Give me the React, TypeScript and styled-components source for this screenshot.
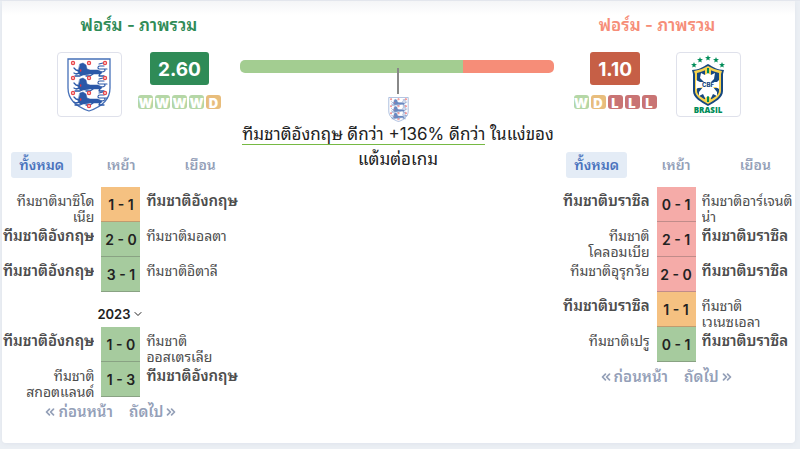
import React from "react";
import styled, { createGlobalStyle } from "styled-components";
import { ChevronDown, ChevronsLeft, ChevronsRight } from "lucide-react";

const GlobalStyle = createGlobalStyle`
  * { box-sizing: border-box; }
  body {
    margin: 0;
    background: #ebeff4;
    color: #222;
    font-family: Inter, "Noto Sans Thai Looped", "Noto Looped Thai", Loma, Waree, "Leelawadee UI", Tahoma, sans-serif;
    font-size: 14px;
  }
  button { font: inherit; border: 0; background: none; padding: 0; cursor: pointer; }
`;

const Page = styled.div`
  padding: 0 5px 6px 2px;
  border-top: 1px solid #e4e7ee;
`;

const Card = styled.main`
  display: grid;
  grid-template-columns: 3fr 4fr 3fr;
  min-height: 442px;
  border-radius: 0 0 4px 4px;
  background: linear-gradient(#f4f5f7, #fff 14px);
  box-shadow: 0 1px 4px #dfe4ec;
`;

const Column = styled.section`
  min-width: 0;
`;

const Summary = styled.header<{ $mirror?: boolean }>`
  display: flex;
  flex-direction: column;
  align-items: center;
  height: 151px;
  padding: ${(p) => (p.$mirror ? "12px 38px 0 0" : "12px 0 0 36px")};
`;

const Title = styled.h2<{ $color: string }>`
  margin: 0 0 15px;
  font-size: 17px;
  line-height: 24px;
  font-weight: 600;
  color: ${(p) => p.$color};
`;

const Team = styled.div<{ $mirror?: boolean }>`
  display: flex;
  flex-direction: ${(p) => (p.$mirror ? "row-reverse" : "row")};
  gap: ${(p) => (p.$mirror ? 19 : 16)}px;
`;

const LogoBox = styled.div`
  display: flex;
  align-items: center;
  justify-content: center;
  width: 65px;
  height: 65px;
  border: 1px solid #dfe1eb;
  border-radius: 4px;
  background: #fff;
`;

const Form = styled.div`
  display: flex;
  flex-direction: column;
  align-items: center;
  gap: 10px;
`;

const Rating = styled.strong<{ $color: string }>`
  padding: 0 8px;
  border-radius: 3px;
  background: ${(p) => p.$color};
  color: #fff;
  font-size: 19px;
  line-height: 36px;
  height: 33px;
  font-weight: 700;
`;

const Results = styled.div`
  display: flex;
  gap: 2px;
`;

const resultColors: Record<string, string> = { W: "#b5d7a6", D: "#e8bd7c", L: "#c97474" };

const Result = styled.span<{ $kind: string }>`
  display: flex;
  justify-content: center;
  width: 15px;
  height: 14px;
  border-radius: 3px;
  background: ${(p) => resultColors[p.$kind]};
  color: #fff;
  font-size: 13px;
  line-height: 16px;
  font-weight: 900;
`;

const Tabs = styled.nav`
  display: grid;
  grid-template-columns: repeat(3, 1fr);
  justify-items: center;
  margin-bottom: 9px;
`;

const Tab = styled.button<{ $active?: boolean }>`
  && {
    height: 26px;
    padding: 0 8px;
    border-radius: 3px;
    background: ${(p) => (p.$active ? "#e4ecf6" : "transparent")};
    color: ${(p) => (p.$active ? "#4a73bd" : "#94a0b8")};
    font-size: 14px;
    line-height: 26px;
    font-weight: 600;
  }
`;

const Matches = styled.table`
  width: 100%;
  table-layout: fixed;
  border-collapse: collapse;
`;

const TeamCell = styled.td<{ $bold?: boolean; $home?: boolean }>`
  height: 35px;
  padding: ${(p) => (p.$home ? "0 7px 0 0" : "0 0 0 6px")};
  color: #4d4d4d;
  font-size: ${(p) => (p.$bold ? 15 : 14)}px;
  font-weight: ${(p) => (p.$bold ? 600 : 400)};
  text-align: ${(p) => (p.$home ? "right" : "left")};
  white-space: ${(p) => (p.$bold ? "nowrap" : "normal")};
  vertical-align: top;
`;

const TeamName = styled.div`
  height: 35px;
  padding-top: 6px;
  overflow: hidden;
  line-height: 16px;
`;

const scoreColors = { win: "#a6cb9e", draw: "#f5c181", loss: "#f5aba8" };

const Score = styled.td<{ $kind: keyof typeof scoreColors }>`
  width: 39px;
  height: 35px;
  padding: 0;
  background: ${(p) => scoreColors[p.$kind]};
  box-shadow: inset 0 -1px rgba(70, 70, 70, 0.3);
  color: #222;
  font-size: 14px;
  font-weight: 600;
  text-align: center;
  white-space: nowrap;
`;

const Season = styled.button`
  && {
    display: flex;
    align-items: center;
    justify-content: center;
    gap: 2px;
    width: 100%;
    height: 35px;
    padding-top: 8px;
    color: #222;
    font-size: 13px;
    font-weight: 600;
  }
`;

const Pager = styled.nav`
  display: flex;
  justify-content: center;
  gap: 16px;
  padding: 5px 20px 0 0;
`;

const PageButton = styled.button`
  && {
    display: flex;
    align-items: center;
    gap: 1px;
    color: #94a0b8;
    font-size: 15px;
    line-height: 20px;
    font-weight: 600;
  }
`;

const Compare = styled.section`
  display: flex;
  flex-direction: column;
  align-items: center;
  padding: 59px 3px 0 0;
`;

const Meter = styled.div`
  width: 100%;
  height: 13px;
  border-radius: 5px;
  background: linear-gradient(to right, #a3cd91 0 71%, #f68d78 71%);
`;

const Marker = styled.div`
  display: flex;
  flex-direction: column;
  align-items: center;
  gap: 3px;
  margin-top: -5px;
  padding-left: 3px;
`;

const Pointer = styled.div`
  width: 2px;
  height: 26px;
  background: #888;
`;

const Faded = styled.div`
  display: flex;
  opacity: 0.7;
`;

const Verdict = styled.p`
  margin: 0;
  padding-left: 2px;
  font-size: 17px;
  line-height: 25px;
  text-align: center;
`;

const Advantage = styled.span`
  border-bottom: 1px solid #76b943;
`;

function Lion({ x, y }: { x: number; y: number }) {
  return (
    <g transform={`translate(${x} ${y})`} stroke="#2b58a8" fill="none" strokeLinecap="round" strokeLinejoin="round">
      <path d="M8 0 11-1l3 2 1 4 3 1 8 0 4 2-1 2-5 0-6 0-5 1-5 0-2-3z" fill="#2b58a8" strokeWidth="0.5" />
      <path d="M8 7 4 6 2 4M8 9 4 10 2 9M12 10 8 12 3 12M21 10 18 12 14 12M28 9 27 12 32 12" strokeWidth="1.3" />
      <path d="M29 8c4 0 5-2 3-3l-5 0c-2-1-1-3 1-3l4 0M27 0l4-1M32 5l3 0" strokeWidth="1.1" />
      <path d="M8.6 6v1" stroke="#e63340" strokeWidth="1.5" />
    </g>
  );
}

const roses = [[6, 5], [22, 5], [38, 5], [6, 20], [22, 20], [38, 20], [6, 35], [22, 35], [38, 35], [22, 48]];

function EnglandCrest({ width, height }: { width: number; height: number }) {
  return (
    <svg width={width} height={height} viewBox="0 0 44 54" role="img" aria-label="England">
      <path d="M1 1h42v29c0 12-9 19-21 23C10 49 1 42 1 30z" fill="#fff" stroke="#4670b8" strokeWidth="1.3" />
      <Lion x={5} y={6} />
      <Lion x={5} y={21} />
      <Lion x={5} y={35} />
      {roses.map(([x, y]) => (
        <g key={`${x}-${y}`}>
          <circle cx={x} cy={y} r="2.2" fill="#e7454b" />
          <circle cx={x} cy={y} r="0.9" fill="#ffe4d8" />
        </g>
      ))}
    </svg>
  );
}

const stars = [[3, 10], [9, 5], [17, 3], [25, 5], [31, 10]];

function BrazilCrest() {
  return (
    <svg width="34" height="60" viewBox="0 0 34 60" role="img" aria-label="Brasil">
      {stars.map(([x, y]) => (
        <path key={x} transform={`translate(${x} ${y})`} d="M0-3 .8-.9 3-.8 1.2.5 1.8 2.6 0 1.4-1.8 2.6-1.2.5-3-.8-.8-.9z" fill="#008c58" />
      ))}
      <path d="M1 15C7 15 12 12 17 9c5 3 10 6 16 6l-1 4v17c0 7-8 11-15 15C10 47 2 43 2 36V19z" fill="#174880" />
      <path d="M3 16c6-1 10-3 14-5 4 2 8 4 14 5l-1 3v17c0 5-6 9-13 13C10 45 4 41 4 36V19z" fill="#f8d34d" />
      <path d="M6 18c5-1 8-3 11-4 3 1 6 3 11 4v18c0 4-5 7-11 10C11 43 6 40 6 36z" fill="#174880" />
      <path d="M14 14h6v32l-3 2-3-2zM6 27h22v6H6z" fill="#f8d34d" />
      <path d="M16 13h2v34h-2zM6 29h22v3H6z" fill="#008c58" />
      <path d="m10 18 4 2 3-2 3 2 4-2-1 6-3 3h6l2-2v9l-3-2-3 0 4 5v4l-4-2-2 4-3-2-3 2-2-4-4 2v-4l4-5-5 1-2 1v-9l4 2h4l-4-4z" fill="#fff" />
      <text x="17" y="32" textAnchor="middle" fontFamily="Inter" fontSize="6" fontWeight="800" fill="#174880">CBF</text>
      <text x="17" y="58" textAnchor="middle" fontFamily="Open Sans" fontSize="8" fontWeight="800" fill="#008c58">BRASIL</text>
    </svg>
  );
}

type Match = [string, string, string, keyof typeof scoreColors];

function MatchTable({ matches, team }: { matches: Match[]; team: string }) {
  return (
    <Matches>
      <colgroup>
        <col />
        <col width="39" />
        <col />
      </colgroup>
      <tbody>
        {matches.map(([home, score, away, kind], i) => (
          <tr key={i}>
            <TeamCell $home $bold={home === team}><TeamName>{home}</TeamName></TeamCell>
            <Score $kind={kind}>{score}</Score>
            <TeamCell $bold={away === team}><TeamName>{away}</TeamName></TeamCell>
          </tr>
        ))}
      </tbody>
    </Matches>
  );
}

function VenueTabs() {
  return (
    <Tabs>
      <Tab $active>ทั้งหมด</Tab>
      <Tab>เหย้า</Tab>
      <Tab>เยือน</Tab>
    </Tabs>
  );
}

function Pagination() {
  return (
    <Pager>
      <PageButton><ChevronsLeft size={14} strokeWidth={3} />ก่อนหน้า</PageButton>
      <PageButton>ถัดไป<ChevronsRight size={14} strokeWidth={3} /></PageButton>
    </Pager>
  );
}

function TeamForm({ rating, color, results }: { rating: string; color: string; results: string }) {
  return (
    <Form>
      <Rating $color={color}>{rating}</Rating>
      <Results>
        {results.split("").map((r, i) => <Result key={i} $kind={r}>{r}</Result>)}
      </Results>
    </Form>
  );
}

const ENG = "ทีมชาติอังกฤษ";
const BRA = "ทีมชาติบราซิล";

const england2024: Match[] = [
  ["ทีมชาติมาซิโดเนีย", "1 - 1", ENG, "draw"],
  [ENG, "2 - 0", "ทีมชาติมอลตา", "win"],
  [ENG, "3 - 1", "ทีมชาติอิตาลี", "win"],
];
const england2023: Match[] = [
  [ENG, "1 - 0", "ทีมชาติออสเตรเลีย", "win"],
  ["ทีมชาติสกอตแลนด์", "1 - 3", ENG, "win"],
];
const brazil: Match[] = [
  [BRA, "0 - 1", "ทีมชาติอาร์เจนติน่า", "loss"],
  ["ทีมชาติโคลอมเบีย", "2 - 1", BRA, "loss"],
  ["ทีมชาติอุรุกวัย", "2 - 0", BRA, "loss"],
  [BRA, "1 - 1", "ทีมชาติเวเนซุเอลา", "draw"],
  ["ทีมชาติเปรู", "0 - 1", BRA, "win"],
];

export default function App() {
  return (
    <Page>
      <GlobalStyle />
      <Card>
        <Column>
          <Summary>
            <Title $color="#2f8b57">ฟอร์ม - ภาพรวม</Title>
            <Team>
              <LogoBox><EnglandCrest width={44} height={54} /></LogoBox>
              <TeamForm rating="2.60" color="#2f8b57" results="WWWWD" />
            </Team>
          </Summary>
          <VenueTabs />
          <MatchTable matches={england2024} team={ENG} />
          <Season>2023 <ChevronDown size={12} /></Season>
          <MatchTable matches={england2023} team={ENG} />
          <Pagination />
        </Column>
        <Compare>
          <Meter />
          <Marker>
            <Pointer />
            <Faded><EnglandCrest width={21} height={25} /></Faded>
          </Marker>
          <Verdict>
            <Advantage>{ENG} ดีกว่า +136% ดีกว่า</Advantage> ในแง่ของแต้มต่อเกม
          </Verdict>
        </Compare>
        <Column>
          <Summary $mirror>
            <Title $color="#f68d78">ฟอร์ม - ภาพรวม</Title>
            <Team $mirror>
              <LogoBox><BrazilCrest /></LogoBox>
              <TeamForm rating="1.10" color="#c65f46" results="WDLLL" />
            </Team>
          </Summary>
          <VenueTabs />
          <MatchTable matches={brazil} team={BRA} />
          <Pagination />
        </Column>
      </Card>
    </Page>
  );
}
